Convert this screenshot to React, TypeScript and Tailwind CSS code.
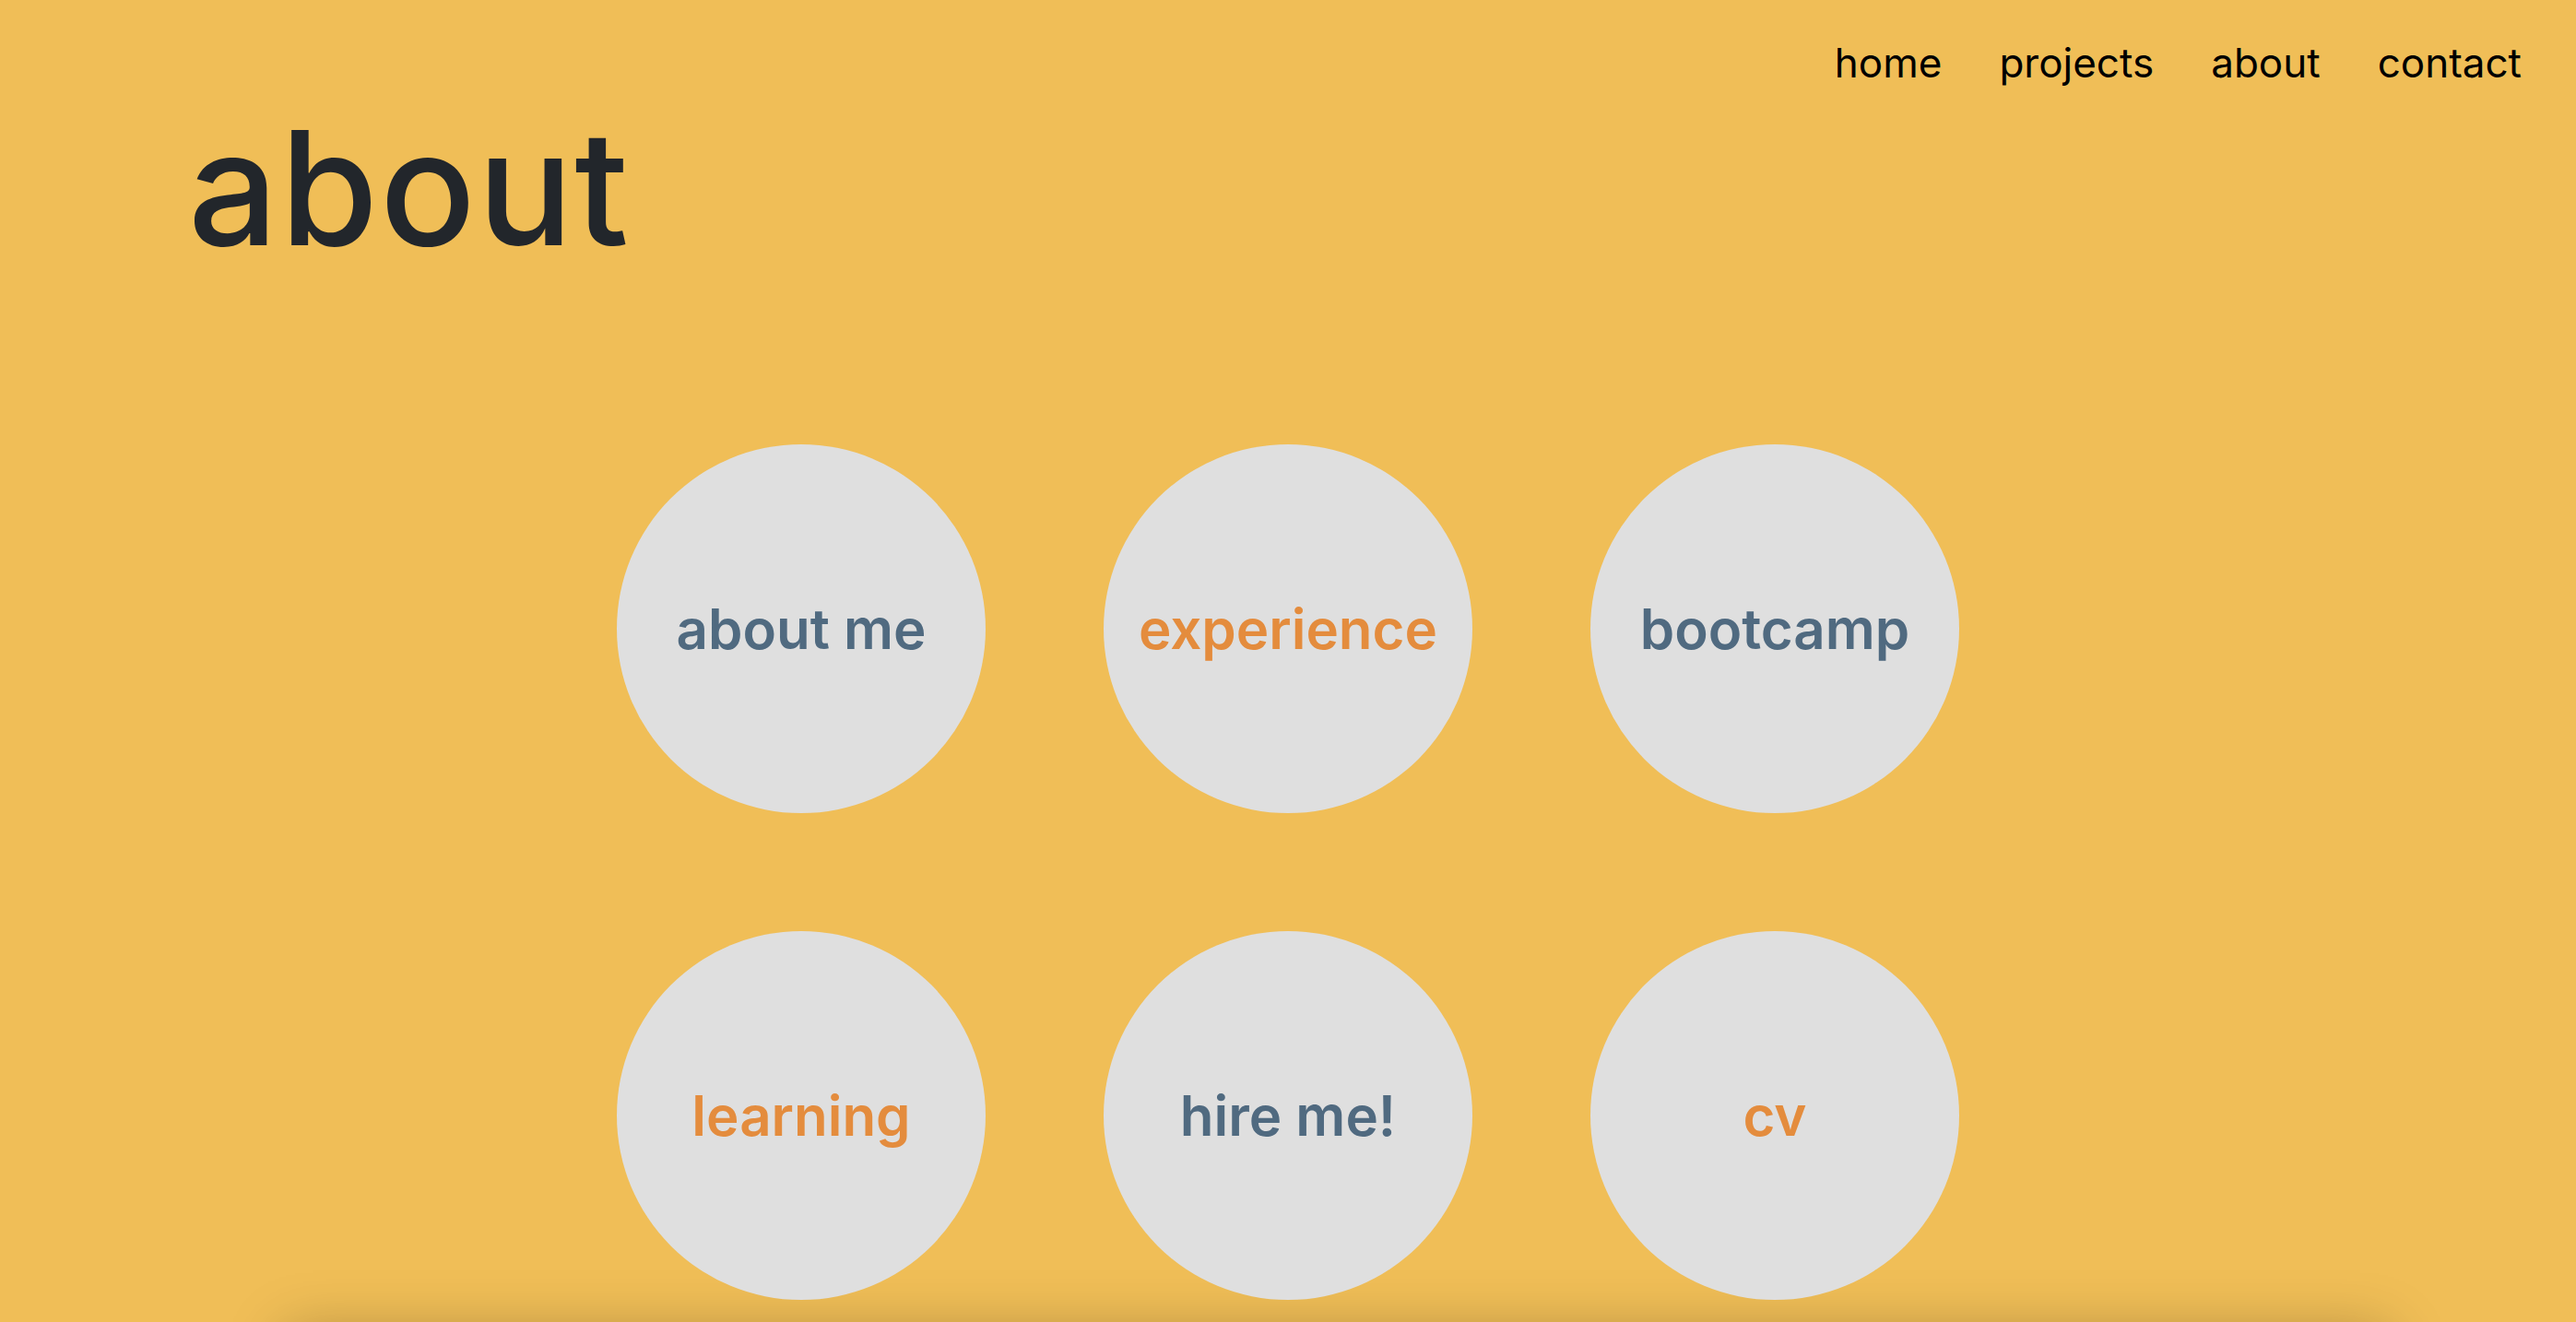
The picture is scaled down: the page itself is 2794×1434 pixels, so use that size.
import React from "react";

const items = [
  { label: "about me", color: "text-[#506a80]" },
  { label: "experience", color: "text-[#e48c3d]" },
  { label: "bootcamp", color: "text-[#506a80]" },
  { label: "learning", color: "text-[#e48c3d]" },
  { label: "hire me!", color: "text-[#506a80]" },
  { label: "cv", color: "text-[#e48c3d]" },
];

export default function App() {
  return (
    <div
      className="w-full h-[1434px] overflow-hidden bg-[#f0be57]"
      style={{ fontFamily: "Inter, 'Noto Sans', sans-serif" }}
    >
      <nav className="flex justify-end gap-[62px] pr-[59px] pt-[46px] text-[44px] leading-none text-black">
        <span>home</span>
        <span>projects</span>
        <span>about</span>
        <span>contact</span>
      </nav>
      <h1 className="mt-[27px] pl-[204px] text-[172px] leading-none font-medium text-[#22262b] tracking-[2px]">
        about
      </h1>
      <div className="mt-[193px] grid grid-cols-[400px_400px_400px] gap-[128px] justify-center">
        {items.map((it) => (
          <div
            key={it.label}
            className="w-[400px] h-[400px] rounded-full bg-[#dfdfdf] flex items-center justify-center"
          >
            <span className={`text-[60px] leading-none font-semibold ${it.color}`}>{it.label}</span>
          </div>
        ))}
      </div>
      <div className="mt-[36px] ml-[310px] w-[2280px] h-[400px] bg-[#f0be57] shadow-[0_0_60px_rgba(0,0,0,0.28)]" />
    </div>
  );
}
